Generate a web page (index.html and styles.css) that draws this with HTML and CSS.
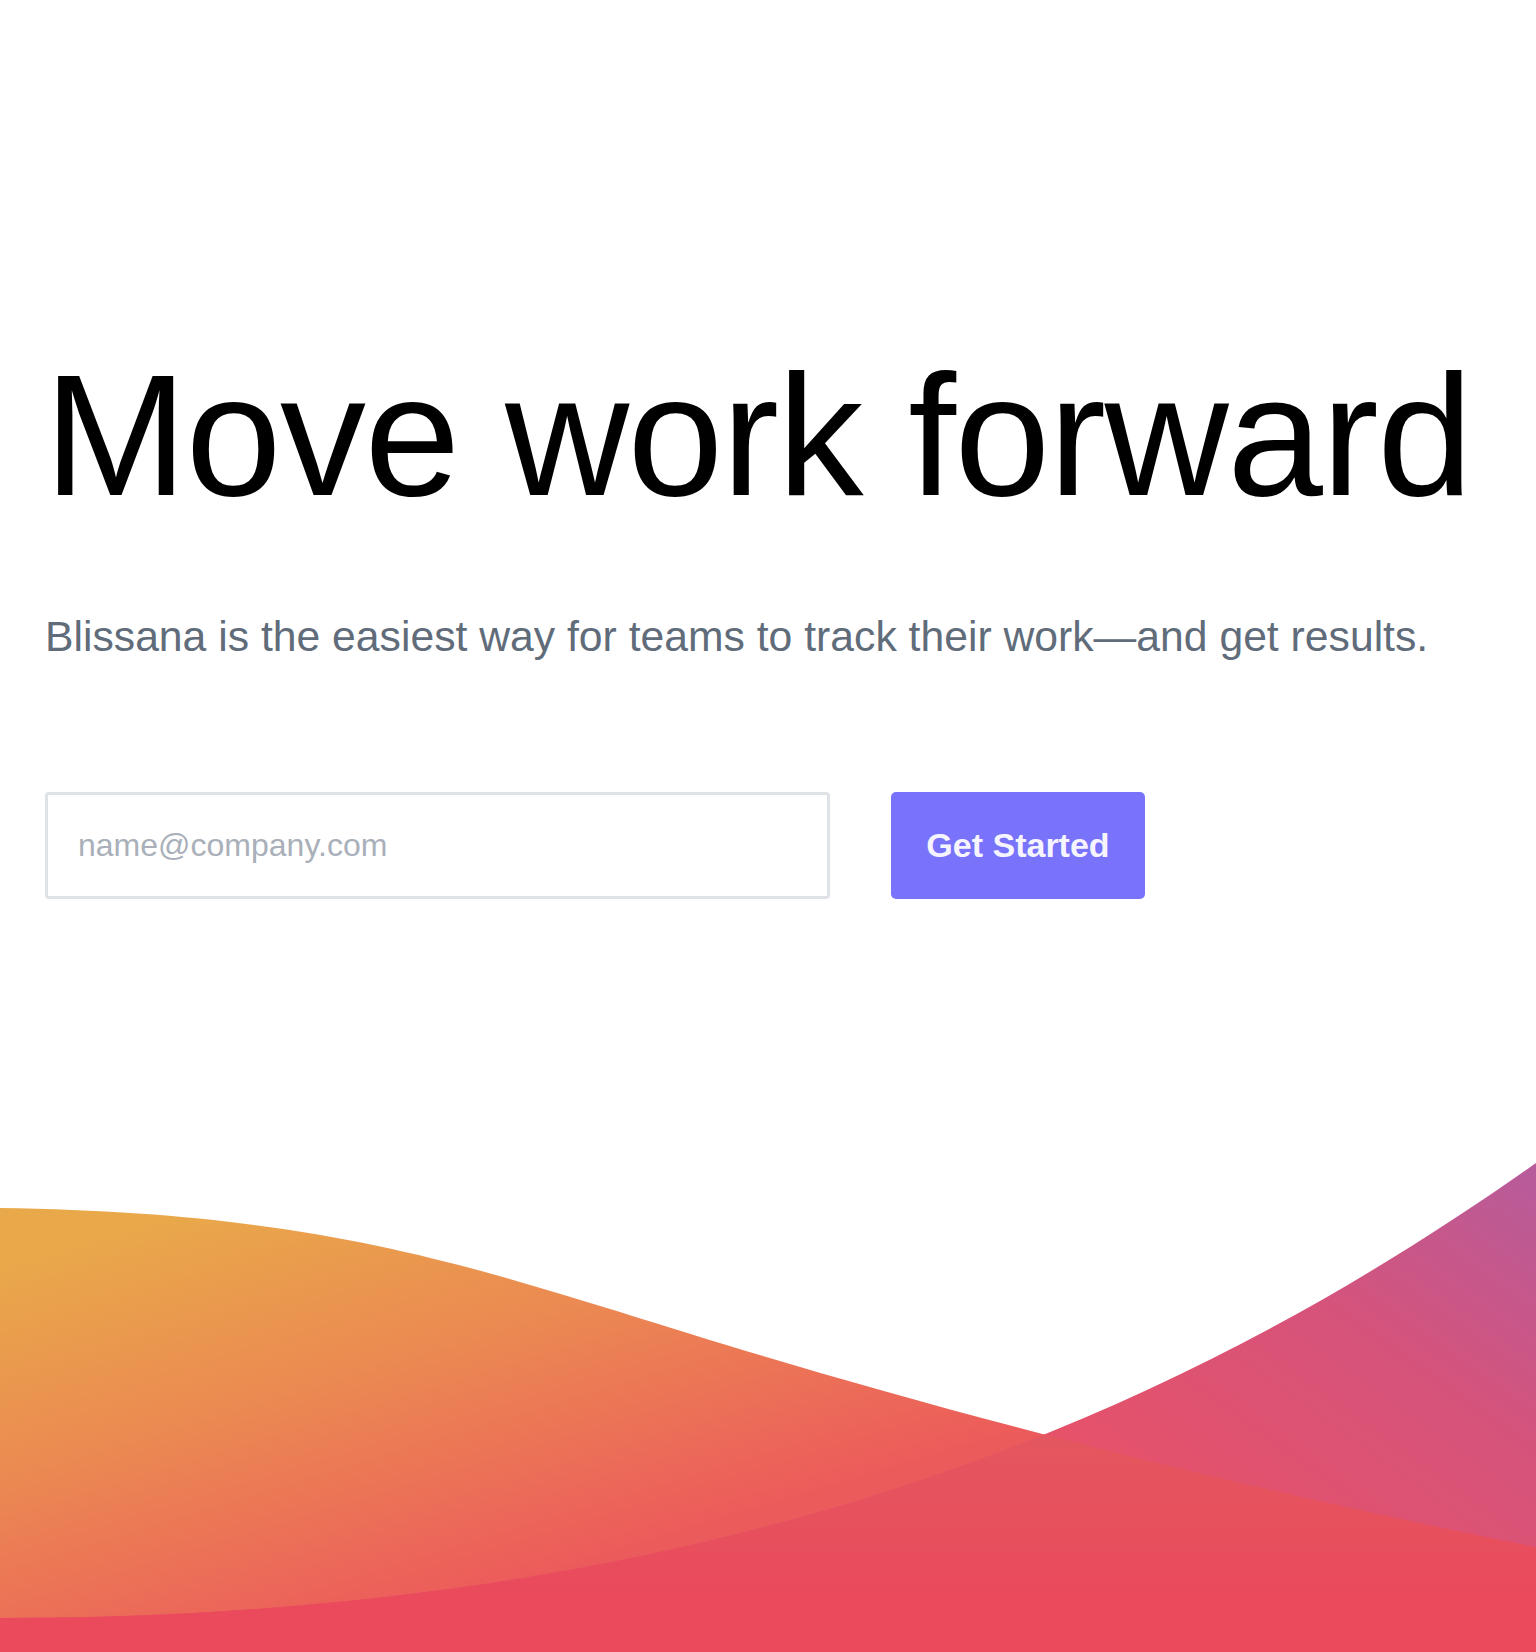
FILE: index.html
```html
<!DOCTYPE html>
<html lang="en">
<head>
<meta charset="utf-8">
<title>Blissana — Move work forward</title>
<link rel="stylesheet" href="styles.css">
</head>
<body>
<main class="hero">
  <h1 class="hero-title">Move work forward</h1>
  <p class="hero-sub">Blissana is the easiest way for teams to track their work—and get results.</p>
  <form class="signup" onsubmit="return false;">
    <input class="signup-input" type="email" placeholder="name@company.com">
    <button class="signup-btn" type="submit">Get Started</button>
  </form>
</main>
<svg class="waves" viewBox="0 1100 1536 552" preserveAspectRatio="none" aria-hidden="true">
  <defs>
    <linearGradient id="gOrange" gradientUnits="userSpaceOnUse" x1="200" y1="1210" x2="330" y2="1640">
      <stop offset="0" stop-color="#e9a84a"/>
      <stop offset="0.45" stop-color="#eb8952"/>
      <stop offset="1" stop-color="#ec5b5b"/>
    </linearGradient>
    <linearGradient id="gPurple" gradientUnits="userSpaceOnUse" x1="1536" y1="1160" x2="1250" y2="1560">
      <stop offset="0" stop-color="#b65c9c"/>
      <stop offset="0.5" stop-color="#d6537a"/>
      <stop offset="1" stop-color="#e5526a"/>
    </linearGradient>
    <linearGradient id="gOverlap" gradientUnits="userSpaceOnUse" x1="0" y1="1435" x2="0" y2="1600">
      <stop offset="0" stop-color="#e4575f"/>
      <stop offset="1" stop-color="#ea4a5c"/>
    </linearGradient>
    <clipPath id="clipOrange">
      <path d="M0 1208 C300 1212 450 1260 620 1312 C850 1385 1150 1470 1536 1547 L1536 1652 L0 1652 Z"/>
    </clipPath>
  </defs>
  <path fill="url(#gOrange)" d="M0 1208 C300 1212 450 1260 620 1312 C850 1385 1150 1470 1536 1547 L1536 1652 L0 1652 Z"/>
  <path fill="url(#gPurple)" d="M1536 1163 C1200 1400 750 1618 0 1618 L0 1652 L1536 1652 Z"/>
  <path fill="url(#gOverlap)" clip-path="url(#clipOrange)" d="M1536 1163 C1200 1400 750 1618 0 1618 L0 1652 L1536 1652 Z"/>
</svg>
</body>
</html>
```

FILE: styles.css
```css
html, body {
  margin: 0;
  padding: 0;
  background: #ffffff;
}

body {
  font-family: "Liberation Sans", Arial, Helvetica, sans-serif;
  overflow: hidden;
}

.hero {
  padding: 349px 0 0 45px;
}

.hero-title {
  margin: 0 0 0 -1px;
  font-size: 172px;
  line-height: 172px;
  font-weight: 400;
  color: #000000;
  letter-spacing: -1.5px;
  white-space: nowrap;
}

.hero-sub {
  margin: 90px 0 0 0;
  font-size: 42.7px;
  line-height: 50px;
  font-weight: 400;
  color: #606c7a;
  white-space: nowrap;
}

.signup {
  margin-top: 131px;
  display: flex;
  align-items: stretch;
  gap: 61px;
}

.signup-input {
  box-sizing: border-box;
  width: 785px;
  height: 107px;
  border: 3px solid #dfe2e6;
  border-radius: 4px;
  padding: 0 0 0 30px;
  font-family: "Liberation Sans", Arial, sans-serif;
  font-size: 32px;
  color: #333a44;
  background: #ffffff;
  outline: none;
}

.signup-input::placeholder {
  color: #a9b0b9;
}

.signup-btn {
  box-sizing: border-box;
  width: 254px;
  height: 107px;
  border: 0;
  border-radius: 5px;
  background: #7873fa;
  color: #f6f4ff;
  font-family: "Liberation Sans", Arial, sans-serif;
  font-weight: 700;
  font-size: 34px;
  cursor: pointer;
  padding: 0;
}

.waves {
  display: block;
  width: 100%;
  height: 552px;
  margin-top: 201px;
}
```
